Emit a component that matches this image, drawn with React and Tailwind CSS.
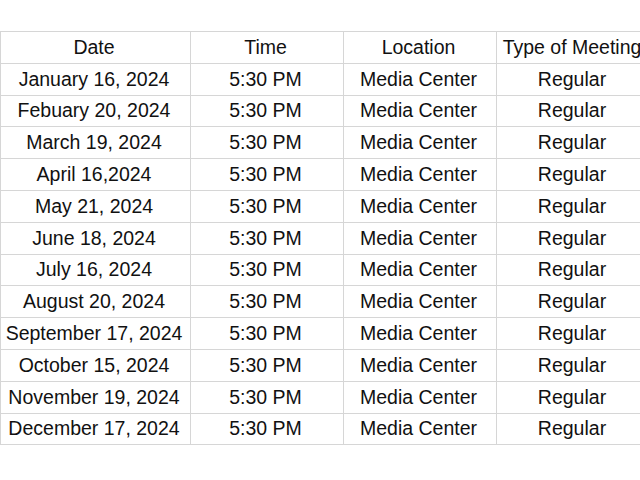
// Calendrier des réunions — tableau simple
const rows = [
  ['January 16, 2024'],
  ['Febuary 20, 2024'],
  ['March 19, 2024'],
  ['April 16,2024'],
  ['May 21, 2024'],
  ['June 18, 2024'],
  ['July 16, 2024'],
  ['August 20, 2024'],
  ['September 17, 2024'],
  ['October 15, 2024'],
  ['November 19, 2024'],
  ['December 17, 2024'],
]

const cell = 'border border-[#d6d6d6] text-center align-middle p-0 pr-[3px] whitespace-nowrap'

export default function App() {
  return (
    <main
      className="w-[640px] h-[480px] overflow-hidden bg-white pt-[31px] text-[19.5px] text-[#111]"
      style={{ fontFamily: '"Liberation Sans", Arial, sans-serif' }}
    >
      <table className="table-fixed border-collapse w-[650px]">
        <colgroup>
          <col className="w-[190px]" />
          <col className="w-[153px]" />
          <col className="w-[153px]" />
          <col className="w-[154px]" />
        </colgroup>
        <thead>
          <tr className="h-[31.8px]">
            <th className={`${cell} font-normal`}>Date</th>
            <th className={`${cell} font-normal`}>Time</th>
            <th className={`${cell} font-normal`}>Location</th>
            <th className={`${cell} font-normal`}>Type of Meeting</th>
          </tr>
        </thead>
        <tbody>
          {rows.map(([date]) => (
            <tr key={date} className="h-[31.8px]">
              <td className={cell}>{date}</td>
              <td className={cell}>5:30 PM</td>
              <td className={cell}>Media Center</td>
              <td className={cell}>Regular</td>
            </tr>
          ))}
        </tbody>
      </table>
    </main>
  )
}
